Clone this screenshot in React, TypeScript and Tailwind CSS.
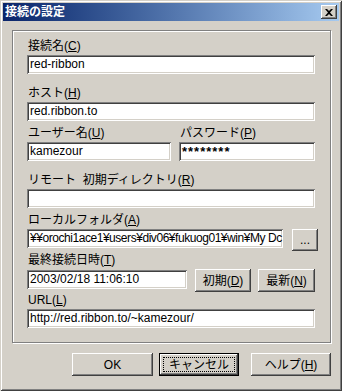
import React from "react";

const sunken =
  "bg-white shadow-[inset_1px_1px_0_#808080,inset_-1px_-1px_0_#ffffff,inset_2px_2px_0_#404040,inset_-2px_-2px_0_#d4d0c8]";
const raised =
  "bg-[#d4d0c8] shadow-[inset_-1px_-1px_0_#404040,inset_1px_1px_0_#ffffff,inset_-2px_-2px_0_#808080,inset_2px_2px_0_#d4d0c8]";

function Label({ children }: { children: React.ReactNode }) {
  return <div className="h-[17px] leading-[17px] pl-[1px] text-[12px] whitespace-nowrap">{children}</div>;
}

function Field({ w, children, extra = "" }: { w: string; children?: React.ReactNode; extra?: string }) {
  return (
    <div className={`${sunken} ${w} h-[19px] pl-[3px] pr-[2px] leading-[19px] text-[12px] overflow-hidden whitespace-nowrap ${extra}`}>
      {children}
    </div>
  );
}

function Btn({ cls, children }: { cls: string; children: React.ReactNode }) {
  return <div className={`${raised} ${cls} flex items-center justify-center text-[12px] whitespace-nowrap`}>{children}</div>;
}

export default function App() {
  return (
    <div className="w-[342px] h-[391px] bg-[#d4d0c8] p-[3px] flex flex-col text-black font-['Liberation_Sans','Noto_Sans_CJK_JP',sans-serif] shadow-[inset_1px_1px_0_#d4d0c8,inset_-1px_-1px_0_#404040,inset_2px_2px_0_#ffffff,inset_-2px_-2px_0_#808080]">
      {/* caption */}
      <div className="h-[18px] shrink-0 flex items-center justify-between bg-linear-to-r from-[#0a246a] to-[#a6caf0] pl-[2px]">
        <span className="text-white font-bold text-[12px] leading-[18px]">接続の設定</span>
        <div className={`${raised} w-[16px] h-[14px] mr-[2px] flex items-center justify-center`}>
          <svg width="8" height="7" viewBox="0 0 8 7">
            <path d="M0 0h2l2 2 2-2h2L5 3.5 8 7H6L4 5 2 7H0l3-3.5z" fill="#000" />
          </svg>
        </div>
      </div>

      {/* group box */}
      <div className="ml-[9px] mt-[9px] w-[319px] h-[313px] shrink-0 border border-[#808080] shadow-[inset_1px_1px_0_#ffffff,1px_1px_0_#ffffff] pt-[7px] pl-[14px] flex flex-col">
        <Label>
          接続名(<span className="underline">C</span>)
        </Label>
        <Field w="w-[288px]">red-ribbon</Field>

        <div className="mt-[11px]">
          <Label>
            ホスト(<span className="underline">H</span>)
          </Label>
        </div>
        <Field w="w-[288px]">red.ribbon.to</Field>

        <div className="mt-[4px] flex">
          <div className="w-[144px]">
            <Label>
              ユーザー名(<span className="underline">U</span>)
            </Label>
            <Field w="w-[144px]">kamezour</Field>
          </div>
          <div className="ml-[8px] w-[136px]">
            <Label>
              パスワード(<span className="underline">P</span>)
            </Label>
            <Field w="w-[136px]" extra="tracking-[1px] font-bold text-[13px]">********</Field>
          </div>
        </div>

        <div className="mt-[11px]">
          <Label>
            リモート{"\u00a0\u00a0"}初期ディレクトリ(<span className="underline">R</span>)
          </Label>
        </div>
        <Field w="w-[288px]" />

        <div className="mt-[4px]">
          <Label>
            ローカルフォルダ(<span className="underline">A</span>)
          </Label>
        </div>
        <div className="flex items-start">
          <Field w="w-[256px]" extra="tracking-[-0.45px]">¥¥orochi1ace1¥users¥div06¥fukuog01¥win¥My Dc</Field>
          <Btn cls="ml-[9px] w-[26px] h-[22px]">...</Btn>
        </div>

        <div className="mt-[1px]">
          <Label>
            最終接続日時(<span className="underline">T</span>)
          </Label>
        </div>
        <div className="flex items-start h-[23px]">
          <Field w="w-[160px]" extra="mt-[1px]">2003/02/18 11:06:10</Field>
          <Btn cls="ml-[8px] w-[56px] h-[23px]">
            初期(<span className="underline">D</span>)
          </Btn>
          <Btn cls="ml-[7px] w-[57px] h-[23px]">
            最新(<span className="underline">N</span>)
          </Btn>
        </div>

        <Label>
          URL(<span className="underline">L</span>)
        </Label>
        <Field w="w-[288px]">http://red.ribbon.to/~kamezour/</Field>
      </div>

      {/* buttons */}
      <div className="mt-[10px] flex ml-[69px]">
        <Btn cls="w-[81px] h-[23px]">OK</Btn>
        <div className="ml-[6px] w-[80px] h-[23px] border border-black flex">
          <div className={`${raised} flex-1 flex p-[3px]`}>
            <div className="flex-1 border border-dotted border-black flex items-center justify-center text-[12px]">
              キャンセル
            </div>
          </div>
        </div>
        <Btn cls="ml-[12px] w-[80px] h-[23px]">
          ヘルプ(<span className="underline">H</span>)
        </Btn>
      </div>
    </div>
  );
}
